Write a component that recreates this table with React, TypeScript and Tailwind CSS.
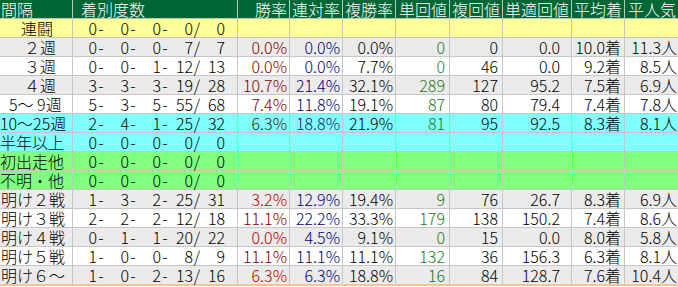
import React from 'react';

// column widths include the 1px right grid line
const COLS = [73, 165, 52, 53, 53, 54, 53, 69, 53, 53];
const VAL_PR = [2, 2, 2, 4, 4, 11, 3, 1];

const HEADERS = ['勝率', '連対率', '複勝率', '単回値', '複回値', '単適回値', '平均着', '平人気'];

type Row = {
  label: string;
  pl: number;
  bg: string;
  k: string[];
  v: string[];
  win?: string;
  rate?: string;
};

const GRAY = 'bg-[#ebebeb]';
const WHITE = 'bg-white';
const YELLOW = 'bg-[#ffff99]';
const CYAN = 'bg-[#80ffff]';
const GREEN = 'bg-[#80ff80]';

const EMPTY = ['', '', '', '', '', '', '', ''];
const ZERO = ['0', '0', '0', '0', '0'];

const rows: Row[] = [
  { label: '連闘', pl: 21, bg: YELLOW, k: ZERO, v: EMPTY },
  { label: '２週', pl: 24, bg: GRAY, k: ['0', '0', '0', '7', '7'], v: ['0.0%', '0.0%', '0.0%', '0', '0', '0.0', '10.0着', '11.3人'] },
  { label: '３週', pl: 24, bg: WHITE, k: ['0', '0', '1', '12', '13'], v: ['0.0%', '0.0%', '7.7%', '0', '46', '0.0', '9.2着', '8.5人'] },
  { label: '４週', pl: 24, bg: GRAY, k: ['3', '3', '3', '19', '28'], v: ['10.7%', '21.4%', '32.1%', '289', '127', '95.2', '7.5着', '6.9人'] },
  { label: '5～ 9週', pl: 9, bg: WHITE, k: ['5', '3', '5', '55', '68'], v: ['7.4%', '11.8%', '19.1%', '87', '80', '79.4', '7.4着', '7.8人'] },
  { label: '10～25週', pl: 0, bg: CYAN, k: ['2', '4', '1', '25', '32'], v: ['6.3%', '18.8%', '21.9%', '81', '95', '92.5', '8.3着', '8.1人'], win: 'text-[#3a2020]', rate: 'text-[#20206a]' },
  { label: '半年以上', pl: 0, bg: CYAN, k: ZERO, v: EMPTY },
  { label: '初出走他', pl: 0, bg: GREEN, k: ZERO, v: EMPTY },
  { label: '不明・他', pl: 0, bg: GREEN, k: ZERO, v: EMPTY },
  { label: '明け２戦', pl: 1, bg: GRAY, k: ['1', '3', '2', '25', '31'], v: ['3.2%', '12.9%', '19.4%', '9', '76', '26.7', '8.3着', '6.9人'], win: 'text-[#c00000]' },
  { label: '明け３戦', pl: 1, bg: WHITE, k: ['2', '2', '2', '12', '18'], v: ['11.1%', '22.2%', '33.3%', '179', '138', '150.2', '7.4着', '8.6人'] },
  { label: '明け４戦', pl: 1, bg: GRAY, k: ['0', '1', '1', '20', '22'], v: ['0.0%', '4.5%', '9.1%', '0', '15', '0.0', '8.0着', '5.8人'], win: 'text-[#b00000]' },
  { label: '明け５戦', pl: 1, bg: WHITE, k: ['1', '0', '0', '8', '9'], v: ['11.1%', '11.1%', '11.1%', '132', '36', '156.3', '6.3着', '8.1人'] },
  { label: '明け６～', pl: 1, bg: GRAY, k: ['1', '0', '2', '13', '16'], v: ['6.3%', '6.3%', '18.8%', '16', '84', '128.7', '7.6着', '10.4人'], win: 'text-[#c00000]' },
];

const valueColor = (i: number, row: Row) => {
  if (i === 0) return row.win ?? 'text-[#800000]';
  if (i === 1) return row.rate ?? 'text-[#000080]';
  if (i === 3) return 'text-[#1a7a1a]';
  return 'text-black';
};

// 着別度数: "0-  0-  0-  0/  0" laid out in fixed slots
const Tally: React.FC<{ k: string[] }> = ({ k }) => (
  <div className="flex h-full items-center">
    {k.map((n, i) => (
      <React.Fragment key={i}>
        <span className="w-[24px] shrink-0 text-right">{n}</span>
        {i < 4 && <span className="w-[8px] shrink-0 text-center">{i === 3 ? '/' : '-'}</span>}
      </React.Fragment>
    ))}
  </div>
);

export default function App() {
  return (
    <div
      className="w-[678px] h-[287px] bg-white text-[16px] leading-[18px] font-light text-black overflow-hidden"
      style={{ fontFamily: '"Noto Sans CJK JP", "Noto Sans", sans-serif' }}
    >
      {/* header */}
      <div className="flex h-[19px] bg-[#006633] text-white border-b border-[#b8c8bc]">
        <div className="w-[73px] shrink-0 border-r border-[#b8c8bc] pl-[1px] flex items-center">間隔</div>
        <div className="w-[165px] shrink-0 border-r border-[#b8c8bc] pl-[8px] flex items-center">着別度数</div>
        {HEADERS.map((h, i) => (
          <div
            key={h}
            className={`shrink-0 flex items-center justify-end pr-[2px] ${i < 7 ? 'border-r border-[#b8c8bc]' : ''}`}
            style={{ width: COLS[i + 2] }}
          >
            {h}
          </div>
        ))}
      </div>

      {/* body */}
      {rows.map((row, r) => (
        <div
          key={row.label}
          className={`flex ${row.bg} ${r === rows.length - 1 ? 'h-[20px] border-b-2 border-[#f3c58f]' : 'h-[19px] border-b border-[#c6c6c6]'}`}
        >
          <div
            className="w-[73px] shrink-0 border-r border-[#c6c6c6] flex items-center whitespace-pre"
            style={{ paddingLeft: row.pl }}
          >
            {row.label}
          </div>
          <div className="w-[165px] shrink-0 border-r border-[#c6c6c6]">
            <Tally k={row.k} />
          </div>
          {row.v.map((val, i) => (
            <div
              key={i}
              className={`shrink-0 flex items-center justify-end ${valueColor(i, row)} ${i < 7 ? 'border-r border-[#c6c6c6]' : ''}`}
              style={{ width: COLS[i + 2], paddingRight: VAL_PR[i] }}
            >
              {val}
            </div>
          ))}
        </div>
      ))}
    </div>
  );
}
